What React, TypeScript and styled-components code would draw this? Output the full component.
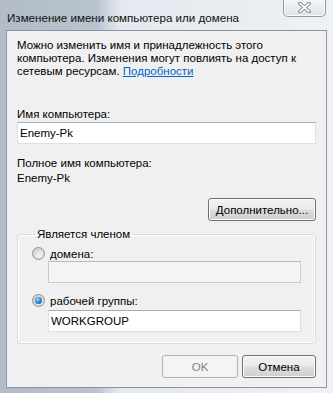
import React from 'react';
import styled, { createGlobalStyle } from 'styled-components';

const GlobalStyle = createGlobalStyle`
  html, body {
    margin: 0;
    padding: 0;
    background: #ffffff;
  }
  body {
    font-family: "Liberation Sans", Arial, sans-serif;
    font-size: 11.5px;
    color: #000;
  }
`;

const Window = styled.div`
  width: 333px;
  height: 393px;
  box-sizing: border-box;
  display: flex;
  flex-direction: column;
  padding: 0 6px 5px 6px;
  background: linear-gradient(
    90deg,
    #b2bcc8 0%,
    #b9c3cf 29%,
    #e4e9ef 36%,
    #eef1f5 100%
  );
`;

const TitleBar = styled.div`
  height: 30px;
  display: flex;
  justify-content: space-between;
  align-items: flex-start;
`;

const Title = styled.span`
  margin-top: 11px;
  margin-left: 1px;
  font-size: 11.6px;
  color: #111;
`;

const CloseButton = styled.div`
  width: 43px;
  height: 18px;
  margin-top: -1px;
  margin-right: 1px;
  box-sizing: border-box;
  border: 1px solid #8f99a6;
  border-top: none;
  border-radius: 0 0 5px 5px;
  background: linear-gradient(#f6f8fa, #e9edf1 50%, #dde3ea);
  box-shadow: inset 0 0 0 1px rgba(255, 255, 255, 0.8);
  display: flex;
  align-items: center;
  justify-content: center;
`;

const Client = styled.div`
  flex: 1;
  border: 1px solid #8b96a4;
  background: #f0f0f0;
  padding: 8px 10px 0 10px;
  display: flex;
  flex-direction: column;
`;

const Intro = styled.p`
  margin: 0;
  line-height: 13px;
`;

const Link = styled.a`
  color: #0066cc;
  text-decoration: underline;
`;

const Label = styled.div<{ $top?: number }>`
  margin-top: ${p => p.$top ?? 0}px;
  line-height: 15px;
`;

const TextBox = styled.div<{ $disabled?: boolean; $indent?: number; $top?: number }>`
  height: 22px;
  box-sizing: border-box;
  margin-left: ${p => p.$indent ?? 0}px;
  margin-top: ${p => p.$top ?? 0}px;
  border: 1px solid ${p => (p.$disabled ? '#c9cbd0' : '#dde1e6')};
  border-top-color: ${p => (p.$disabled ? '#b9bcc1' : '#abadb3')};
  background: ${p => (p.$disabled ? '#f4f4f4' : '#ffffff')};
  padding: 0 2px;
  display: flex;
  align-items: center;
`;

const ButtonRow = styled.div<{ $top: number }>`
  display: flex;
  justify-content: flex-end;
  gap: 4px;
  margin-top: ${p => p.$top}px;
`;

const Button = styled.div<{ $width: number; $disabled?: boolean }>`
  width: ${p => p.$width}px;
  height: 23px;
  box-sizing: border-box;
  border: 1px solid ${p => (p.$disabled ? '#adb2b5' : '#707070')};
  border-radius: 3px;
  background: ${p =>
    p.$disabled
      ? '#f4f4f4'
      : 'linear-gradient(#f2f2f2 0%, #ebebeb 48%, #dddddd 52%, #cfcfcf 100%)'};
  box-shadow: inset 0 0 0 1px ${p => (p.$disabled ? '#f4f4f4' : '#fcfcfc')};
  color: ${p => (p.$disabled ? '#838383' : '#000')};
  display: flex;
  align-items: center;
  justify-content: center;
`;

const Group = styled.fieldset`
  margin: 6px 0 0 0;
  padding: 0 14px 11px 14px;
  border: 1px solid #d5dfe5;
  border-radius: 3px;
  box-shadow: inset 0 0 0 1px #ffffff;
  min-width: 0;
`;

const Legend = styled.legend`
  padding: 0 2px;
  margin-left: 3px;
  line-height: 14px;
`;

const RadioLine = styled.div<{ $top?: number }>`
  display: flex;
  align-items: center;
  gap: 5px;
  height: 15px;
  margin-top: ${p => p.$top ?? 0}px;
`;

const RadioCircle = styled.span<{ $checked?: boolean }>`
  width: 13px;
  height: 13px;
  box-sizing: border-box;
  border-radius: 50%;
  border: 1px solid #8e8f8f;
  background: radial-gradient(circle at 60% 65%, #f4f4f4 0%, #d9d9d9 55%, #c3c3c3 100%);
  display: flex;
  align-items: center;
  justify-content: center;
  &::after {
    content: '';
    display: ${p => (p.$checked ? 'block' : 'none')};
    width: 7px;
    height: 7px;
    border-radius: 50%;
    background: radial-gradient(circle at 40% 35%, #9ee0ff 0%, #2a8fd4 45%, #0c4c86 100%);
  }
`;

function CloseGlyph() {
  return (
    <svg width="13" height="11" viewBox="0 0 13 11">
      <path d="M2 1.5 L11 9.5 M11 1.5 L2 9.5" stroke="#6d7786" strokeWidth="3.6" strokeLinecap="round" />
      <path d="M2 1.5 L11 9.5 M11 1.5 L2 9.5" stroke="#ffffff" strokeWidth="1.8" strokeLinecap="round" />
    </svg>
  );
}

export default function App() {
  return (
    <>
      <GlobalStyle />
      <Window>
        <TitleBar>
          <Title>Изменение имени компьютера или домена</Title>
          <CloseButton>
            <CloseGlyph />
          </CloseButton>
        </TitleBar>
        <Client>
          <Intro>
            Можно изменить имя и принадлежность этого
            <br />
            компьютера. Изменения могут повлиять на доступ к
            <br />
            сетевым ресурсам. <Link>Подробности</Link>
          </Intro>

          <Label $top={29}>Имя компьютера:</Label>
          <TextBox>Enemy-Pk</TextBox>

          <Label $top={12}>Полное имя компьютера:</Label>
          <Label>Enemy-Pk</Label>

          <ButtonRow $top={12}>
            <Button $width={108}>Дополнительно...</Button>
          </ButtonRow>

          <Group>
            <Legend>Является членом</Legend>
            <RadioLine $top={5}>
              <RadioCircle />
              <span>домена:</span>
            </RadioLine>
            <TextBox $disabled $indent={16} />
            <RadioLine $top={10}>
              <RadioCircle $checked />
              <span>рабочей группы:</span>
            </RadioLine>
            <TextBox $indent={16} $top={2}>WORKGROUP</TextBox>
          </Group>

          <ButtonRow $top={11}>
            <Button $width={76} $disabled>OK</Button>
            <Button $width={74}>Отмена</Button>
          </ButtonRow>
        </Client>
      </Window>
    </>
  );
}
